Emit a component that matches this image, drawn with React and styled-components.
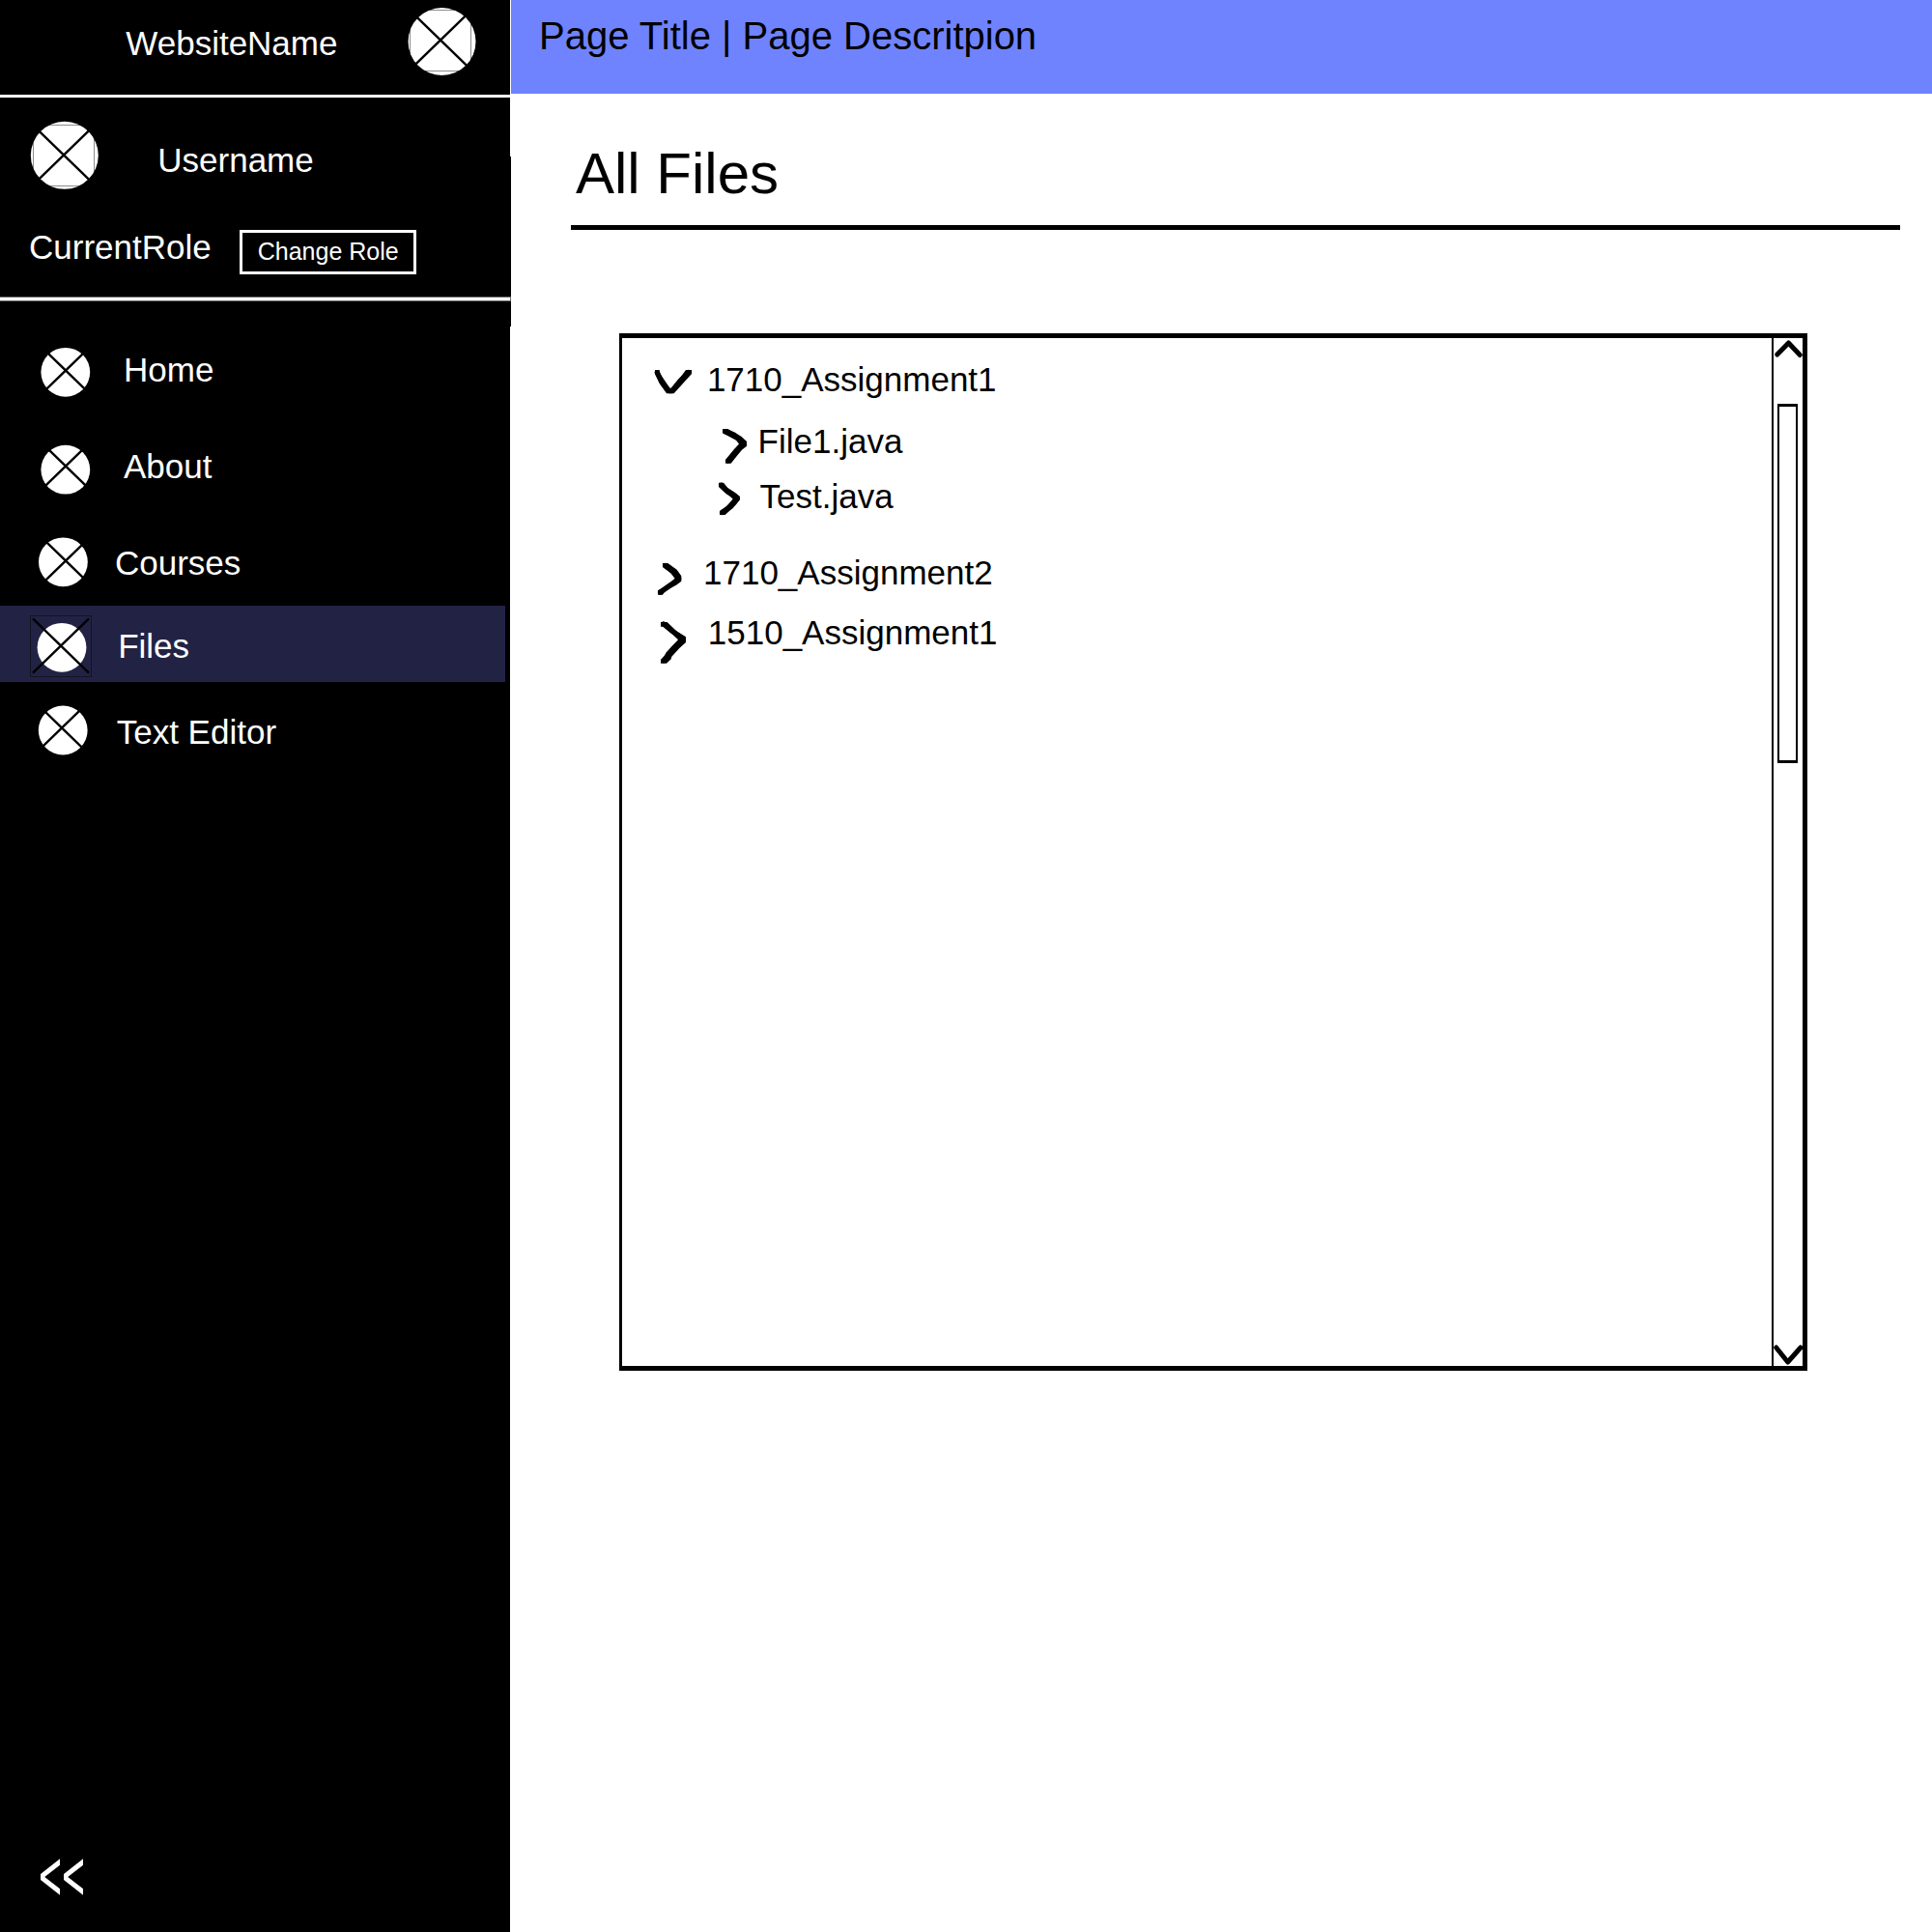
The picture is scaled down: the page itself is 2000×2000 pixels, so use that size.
import React from "react";
import styled, { createGlobalStyle } from "styled-components";

const GlobalStyle = createGlobalStyle`
  *, *::before, *::after { box-sizing: border-box; }
  body {
    margin: 0;
    background: #fff;
    color: #000;
    font-family: "Liberation Sans", Arial, Helvetica, sans-serif;
    font-size: 35px;
    line-height: 40px;
  }
  svg { display: block; flex: none; overflow: visible; }
`;

const Page = styled.div`
  display: grid;
  grid-template-columns: 528px 1fr;
  width: 2000px;
  height: 2000px;
  overflow: hidden;
`;

const Sidebar = styled.aside`
  position: relative;
  display: flex;
  flex-direction: column;
  background: #000;
  color: #fff;

  &::after {
    content: "";
    position: absolute;
    left: 528px;
    top: 162px;
    width: 1px;
    height: 176px;
    background: #000;
  }
`;

const Brand = styled.div`
  display: flex;
  align-items: flex-start;
  justify-content: space-between;
  height: 101px;
  padding: 10px 40px 0 130.3px;
  border-bottom: 3px solid #fff;
`;

const Label = styled.span`
  margin-top: ${(p) => p.$top || 0}px;
  margin-left: ${(p) => p.$left || 0}px;
  white-space: nowrap;
`;

const Profile = styled.section`
  height: 206px;
  padding-top: 28px;
`;

const ProfileRow = styled.div`
  display: flex;
  align-items: flex-start;
  height: 109px;
  padding-left: ${(p) => p.$indent}px;
`;

const RoleButton = styled.button`
  width: 183px;
  height: 46px;
  margin: 0 0 0 29.5px;
  padding: 0 0 2px;
  border: 3px solid #fff;
  background: #000;
  color: #fff;
  font: 25px/38px "Liberation Sans", Arial, sans-serif;
  white-space: nowrap;
`;

const Divider = styled.div`
  height: 5px;
  border: 1px solid #6b6b6b;
  border-left: 0;
  background: #fff;
  position: relative;
  z-index: 1;
  margin-right: -1px;
`;

const Nav = styled.nav`
  display: flex;
  flex-direction: column;
  flex: 1;
`;

const NavItem = styled.a`
  display: flex;
  align-items: flex-start;
  width: 523px;
  height: ${(p) => (p.$active ? 79 : 64)}px;
  margin-top: ${(p) => p.$gap}px;
  padding: ${(p) => (p.$active ? 10 : 0)}px 0 0 ${(p) => p.$indent}px;
  background: ${(p) => (p.$active ? "#222344" : "transparent")};
`;

const Collapse = styled.div`
  padding: 0 0 38px 42px;
`;

const Main = styled.main`
  display: flex;
  flex-direction: column;
`;

const Header = styled.header`
  height: 97px;
  margin-left: 1px;
  padding: 14px 0 0 29px;
  background: #6f83ff;
  font-size: 40px;
  line-height: 46px;
`;

const Title = styled.h1`
  width: 1376px;
  height: 141px;
  margin: 0 0 0 63px;
  padding: 49px 0 0 5px;
  border-bottom: 5px solid #000;
  font-size: 60px;
  font-weight: 400;
  line-height: 68px;
`;

const Panel = styled.section`
  display: flex;
  width: 1230px;
  height: 1074px;
  margin: 107px 0 0 113px;
  border: solid #000;
  border-width: 5px 5px 5px 3px;
`;

const Tree = styled.div`
  flex: 1;
  padding-top: 23px;
`;

const TreeRow = styled.div`
  display: flex;
  height: 40px;
  margin-bottom: ${(p) => p.$after}px;
  padding-left: ${(p) => (p.$child ? 96 : 28)}px;
`;

const ScrollBar = styled.div`
  display: flex;
  flex-direction: column;
  justify-content: space-between;
  width: 32px;
  border-left: 2px solid #000;
`;

const Track = styled.div`
  flex: 1;
  padding: 28px 0 0 4px;
`;

const Thumb = styled.div`
  width: 21px;
  height: 372px;
  border: solid #000;
  border-width: 3px 2px;
`;

function Placeholder({ r = 25.4, cx, cy }) {
  return (
    <svg width="64" height="64" viewBox="0 0 64 64">
      <circle cx={cx} cy={cy} r={r} fill="#fff" />
      <rect x="0.5" y="0.5" width="63" height="63" fill="none" stroke="#000" strokeOpacity="0.45" />
      <path d="M3 3.3 61 59.7M61 3.3 3 59.7" stroke="#000" strokeWidth="2.4" />
    </svg>
  );
}

const navItems = [
  { text: "Home", gap: 40, indent: 36, top: 11, left: 28, cx: 31.8, cy: 33.3 },
  { text: "About", gap: 35, indent: 36, top: 12, left: 28, cx: 31.8, cy: 35.2 },
  { text: "Courses", gap: 34, indent: 36, top: 14, left: 19, cx: 29.4, cy: 32.8 },
  { text: "Files", gap: 14, indent: 31, top: 12, left: 27.2, cx: 33, cy: 33.3, active: true },
  { text: "Text Editor", gap: 16, indent: 32, top: 16, left: 24.7, cx: 33.2, cy: 34 },
];

const files = [
  { text: "1710_Assignment1", after: 23, left: 19.9,
    shape: "18,30 32,30 33,40 64,86 72,86 114,30 132,30 132,42 77,103 54,103 35,76 18,42",
    spine: "25,38 38,66 61,95 71,95 96,64 123,38" },
  { text: "File1.java", after: 18, left: 4.6, top: 1, child: true,
    shape: "24,24 40,24 82,47 99,63 99,77 84,89 50,131 33,131 33,121 76,72 66,59 24,37",
    spine: "32,32 60,43 90,67 68,90 41,123" },
  { text: "Test.java", after: 39, left: 6.6, child: true,
    shape: "12,17 27,17 40,33 62,47 78,60 78,70 66,85 45,105 32,117 15,117 15,105 26,101 56,68 46,57 28,45 12,30",
    spine: "20,25 40,45 69,65 50,91 23,109" },
  { text: "1710_Assignment2", after: 22, left: 16,
    shape: "42,30 58,30 86,50 100,70 100,86 84,98 49,116 42,128 27,128 27,115 64,96 80,78 68,62 42,41",
    spine: "50,38 76,55 92,78 69,96 35,120" },
  { text: "1510_Assignment1", after: 0, left: 20.8,
    shape: "36,27 56,27 84,54 114,73 114,90 94,108 70,134 68,142 54,155 36,155 36,143 47,136 52,122 90,82 74,66 50,41 36,41",
    spine: "45,33 72,55 105,80 78,106 60,128 45,146" },
];

function Chevron({ shape, spine }) {
  return (
    <svg width="40" height="40" viewBox="0 0 120 120">
      <polygon points={shape} />
      <polyline points={spine} fill="none" stroke="#000" strokeWidth="16" strokeLinecap="round" strokeLinejoin="round" />
    </svg>
  );
}

function ScrollArrow({ points }) {
  return (
    <svg width="30" height="40" viewBox="0 0 30 40">
      <polyline points={points} fill="none" stroke="#000" strokeWidth="5" strokeLinecap="round" strokeLinejoin="round" />
    </svg>
  );
}

export default function App() {
  return (
    <>
      <GlobalStyle />
      <Page>
        <Sidebar>
          <Brand>
            <Label $top={15}>WebsiteName</Label>
            <Placeholder r={35} cx={33.5} cy={33} />
          </Brand>
          <Profile>
            <ProfileRow $indent={34}>
              <Placeholder r={35} cx={32.8} cy={31.8} />
              <Label $top={17} $left={65.3}>Username</Label>
            </ProfileRow>
            <ProfileRow $indent={30}>
              <Label $top={-2}>CurrentRole</Label>
              <RoleButton>Change Role</RoleButton>
            </ProfileRow>
          </Profile>
          <Divider />
          <Nav>
            {navItems.map((n) => (
              <NavItem key={n.text} $gap={n.gap} $indent={n.indent} $active={n.active}>
                <Placeholder cx={n.cx} cy={n.cy} />
                <Label $top={n.top} $left={n.left}>{n.text}</Label>
              </NavItem>
            ))}
          </Nav>
          <Collapse>
            <svg width="44" height="38" viewBox="0 0 44 38" fill="#fff">
              <path d="M20 .3 0 16v6l20 15.7v-6.4L4.2 19 20 6.7Z" />
              <path d="M44 .3 24 16v6l20 15.7v-6.4L28.2 19 44 6.7Z" />
            </svg>
          </Collapse>
        </Sidebar>
        <Main>
          <Header>Page Title | Page Descritpion</Header>
          <Title>All Files</Title>
          <Panel>
            <Tree>
              {files.map((f) => (
                <TreeRow key={f.text} $after={f.after} $child={f.child}>
                  <Chevron shape={f.shape} spine={f.spine} />
                  <Label $top={f.top} $left={f.left}>{f.text}</Label>
                </TreeRow>
              ))}
            </Tree>
            <ScrollBar>
              <ScrollArrow points="3.7,17 15.5,5 27.3,17.5" />
              <Track>
                <Thumb />
              </Track>
              <ScrollArrow points="2.7,21 14.7,36 28,21" />
            </ScrollBar>
          </Panel>
        </Main>
      </Page>
    </>
  );
}
